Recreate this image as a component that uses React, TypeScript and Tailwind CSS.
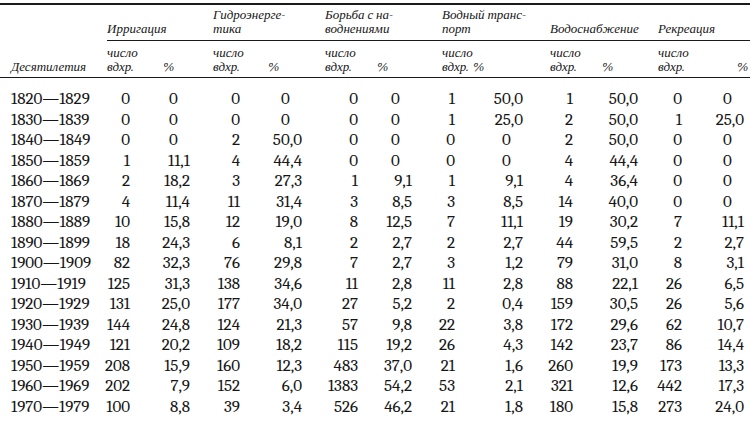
const rows: string[][] = [
  ["1820—1829", "0", "0", "0", "0", "0", "0", "1", "50,0", "1", "50,0", "0", "0"],
  ["1830—1839", "0", "0", "0", "0", "0", "0", "1", "25,0", "2", "50,0", "1", "25,0"],
  ["1840—1849", "0", "0", "2", "50,0", "0", "0", "0", "0", "2", "50,0", "0", "0"],
  ["1850—1859", "1", "11,1", "4", "44,4", "0", "0", "0", "0", "4", "44,4", "0", "0"],
  ["1860—1869", "2", "18,2", "3", "27,3", "1", "9,1", "1", "9,1", "4", "36,4", "0", "0"],
  ["1870—1879", "4", "11,4", "11", "31,4", "3", "8,5", "3", "8,5", "14", "40,0", "0", "0"],
  ["1880—1889", "10", "15,8", "12", "19,0", "8", "12,5", "7", "11,1", "19", "30,2", "7", "11,1"],
  ["1890—1899", "18", "24,3", "6", "8,1", "2", "2,7", "2", "2,7", "44", "59,5", "2", "2,7"],
  ["1900—1909", "82", "32,3", "76", "29,8", "7", "2,7", "3", "1,2", "79", "31,0", "8", "3,1"],
  ["1910—1919", "125", "31,3", "138", "34,6", "11", "2,8", "11", "2,8", "88", "22,1", "26", "6,5"],
  ["1920—1929", "131", "25,0", "177", "34,0", "27", "5,2", "2", "0,4", "159", "30,5", "26", "5,6"],
  ["1930—1939", "144", "24,8", "124", "21,3", "57", "9,8", "22", "3,8", "172", "29,6", "62", "10,7"],
  ["1940—1949", "121", "20,2", "109", "18,2", "115", "19,2", "26", "4,3", "142", "23,7", "86", "14,4"],
  ["1950—1959", "208", "15,9", "160", "12,3", "483", "37,0", "21", "1,6", "260", "19,9", "173", "13,3"],
  ["1960—1969", "202", "7,9", "152", "6,0", "1383", "54,2", "53", "2,1", "321", "12,6", "442", "17,3"],
  ["1970—1979", "100", "8,8", "39", "3,4", "526", "46,2", "21", "1,8", "180", "15,8", "273", "24,0"],
];

// column tracks end exactly where the numbers end
const cols =
  "grid grid-cols-[100px_30px_60px_50px_62px_56px_54px_43px_68px_50px_65px_44px_1fr]";

const groups = [
  { lines: ["", "Ирригация"], pl: "pl-[7px]", start: "col-start-2" },
  { lines: ["Гидроэнерге-", "тика"], pl: "pl-[23px]", start: "col-start-4" },
  { lines: ["Борьба с на-", "воднениями"], pl: "pl-[23px]", start: "col-start-6" },
  { lines: ["Водный транс-", "порт"], pl: "pl-[30px]", start: "col-start-8" },
  { lines: ["", "Водоснабжение"], pl: "pl-[27px]", start: "col-start-10" },
  { lines: ["", "Рекреация"], pl: "pl-[20px]", start: "col-start-12" },
];

const subPad = [
  ["pl-[7px]", "pl-[33px]"],
  ["pl-[23px]", "pl-[28px]"],
  ["pl-[23px]", "pl-[19px]"],
  ["pl-[30px]", "pl-[18px]"],
  ["pl-[27px]", "pl-[29px]"],
  ["pl-[20px]", "pl-[55px]"],
];

const Pct = ({ v }: { v: string }) =>
  v === "0" ? (
    <>
      0<span className="invisible">,0</span>
    </>
  ) : (
    <>{v}</>
  );

const hd = "font-serif italic text-[13px] leading-[14px] whitespace-nowrap";
const nm = "font-serif text-[17px] leading-[20.5px] whitespace-nowrap";

export default function App() {
  return (
    <div className="font-serif w-[750px] h-[421px] overflow-hidden bg-white pt-[3px] text-[#161616]">
      <div className="border-t-2 border-[#1a1a1a]" />

      {/* group headings */}
      <div className={`${cols} h-[35px] items-end pb-[4px]`}>
        {groups.map((g) => (
          <div key={g.lines[1]} className={`${g.start} col-span-2 ${g.pl} ${hd}`}>
            <div>{g.lines[0] || "\u00a0"}</div>
            <div>{g.lines[1]}</div>
          </div>
        ))}
      </div>
      <div className="ml-[107px] border-t border-[#1a1a1a]" />

      {/* sub headings */}
      <div className={`${cols} h-[36px] items-end pb-[3px]`}>
        <div className={`pl-[11px] ${hd}`}>Десятилетия</div>
        {subPad.map((p, i) => (
          <div key={i} className="contents">
            <div className={`${p[0]} ${hd}`}>
              <div>число</div>
              <div>вдхр.</div>
            </div>
            <div className={`${p[1]} ${hd}`}>%</div>
          </div>
        ))}
      </div>
      <div className="border-t border-[#1a1a1a]" />

      {/* body */}
      <div className="pt-[11px]">
        {rows.map((r) => (
          <div key={r[0]} className={`${cols} h-[20.5px]`}>
            <div className={`pl-[11px] ${nm}`}>{r[0]}</div>
            {r.slice(1).map((v, i) => (
              <div
                key={i}
                className={`flex justify-end ${nm} ${i === 11 ? "pr-[6px]" : ""}`}
              >
                {i % 2 === 1 ? <Pct v={v} /> : v}
              </div>
            ))}
          </div>
        ))}
      </div>
    </div>
  );
}
